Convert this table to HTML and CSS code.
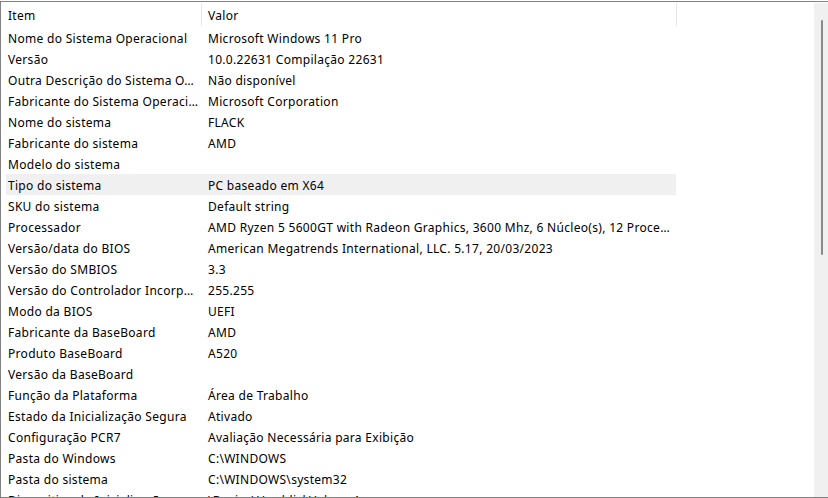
FILE: index.html
```html
<!DOCTYPE html>
<html lang="pt-BR">
<head>
<meta charset="utf-8">
<title>Informações do Sistema</title>
<link rel="stylesheet" href="styles.css">
</head>
<body>
<div class="frame">
  <div class="list">
    <div class="header">
      <div class="hcell">Item</div>
      <div class="hcell">Valor</div>
      <div class="hcell hrest"></div>
    </div>
    <div class="rows">
      <div class="row"><span>Nome do Sistema Operacional</span><span>Microsoft Windows 11 Pro</span></div>
      <div class="row"><span>Versão</span><span>10.0.22631 Compilação 22631</span></div>
      <div class="row"><span>Outra Descrição do Sistema O…</span><span>Não disponível</span></div>
      <div class="row"><span>Fabricante do Sistema Operaci…</span><span>Microsoft Corporation</span></div>
      <div class="row"><span>Nome do sistema</span><span>FLACK</span></div>
      <div class="row"><span>Fabricante do sistema</span><span>AMD</span></div>
      <div class="row"><span>Modelo do sistema</span><span></span></div>
      <div class="row hl"><span>Tipo do sistema</span><span>PC baseado em X64</span></div>
      <div class="row"><span>SKU do sistema</span><span>Default string</span></div>
      <div class="row"><span>Processador</span><span>AMD Ryzen 5 5600GT with Radeon Graphics, 3600 Mhz, 6 Núcleo(s), 12 Proce…</span></div>
      <div class="row"><span>Versão/data do BIOS</span><span>American Megatrends International, LLC. 5.17, 20/03/2023</span></div>
      <div class="row"><span>Versão do SMBIOS</span><span>3.3</span></div>
      <div class="row"><span>Versão do Controlador Incorp…</span><span>255.255</span></div>
      <div class="row"><span>Modo da BIOS</span><span>UEFI</span></div>
      <div class="row"><span>Fabricante da BaseBoard</span><span>AMD</span></div>
      <div class="row"><span>Produto BaseBoard</span><span>A520</span></div>
      <div class="row"><span>Versão da BaseBoard</span><span></span></div>
      <div class="row"><span>Função da Plataforma</span><span>Área de Trabalho</span></div>
      <div class="row"><span>Estado da Inicialização Segura</span><span>Ativado</span></div>
      <div class="row"><span>Configuração PCR7</span><span>Avaliação Necessária para Exibição</span></div>
      <div class="row"><span>Pasta do Windows</span><span>C:\WINDOWS</span></div>
      <div class="row"><span>Pasta do sistema</span><span>C:\WINDOWS\system32</span></div>
      <div class="row"><span>Dispositivo de Inicialização</span><span>\Device\HarddiskVolume1</span></div>
    </div>
  </div>
  <div class="scrollbar"><div class="thumb"></div></div>
</div>
</body>
</html>
```
FILE: styles.css
```css
html, body {
  margin: 0;
  padding: 0;
  background: #ffffff;
}
body {
  width: 828px;
  height: 498px;
  overflow: hidden;
  font-family: "Noto Sans", "Open Sans", sans-serif;
  font-size: 12px;
  letter-spacing: 0.3px;
  color: #000000;
}
.frame {
  margin-top: 1px;
  height: 495px;
  border-top: 1px solid #828282;
  border-left: 1px solid #828282;
  border-bottom: 1px solid #828282;
  display: flex;
  overflow: hidden;
}
.list {
  flex: 1;
  overflow: hidden;
}
.header {
  display: grid;
  grid-template-columns: 200px 475px 1fr;
  height: 25px;
}
.hcell {
  padding-left: 7px;
  padding-top: 2px;
  line-height: 23px;
  height: 25px;
  box-sizing: border-box;
  white-space: nowrap;
  overflow: hidden;
  position: relative;
}
.hcell + .hcell::before {
  content: "";
  position: absolute;
  left: 0;
  top: 1px;
  bottom: 1px;
  width: 1px;
  background: #e5e5e5;
}
.rows {
  display: flex;
  flex-direction: column;
}
.row {
  display: grid;
  grid-template-columns: 200px 475px;
  height: 21px;
  flex-shrink: 0;
}
.row span {
  padding-left: 7px;
  padding-top: 2px;
  line-height: 19px;
  height: 21px;
  box-sizing: border-box;
  white-space: nowrap;
  overflow: hidden;
}
.row.hl {
  background: linear-gradient(to right, transparent 5px, #f0f0f0 5px);
  width: 675px;
}
.scrollbar {
  width: 14px;
  margin-top: 1px;
  background: #f0f0f0;
  position: relative;
}
.thumb {
  position: absolute;
  left: 7px;
  top: 17px;
  width: 2px;
  height: 235px;
  border-radius: 1px;
  background: #8a8a8a;
}
```
